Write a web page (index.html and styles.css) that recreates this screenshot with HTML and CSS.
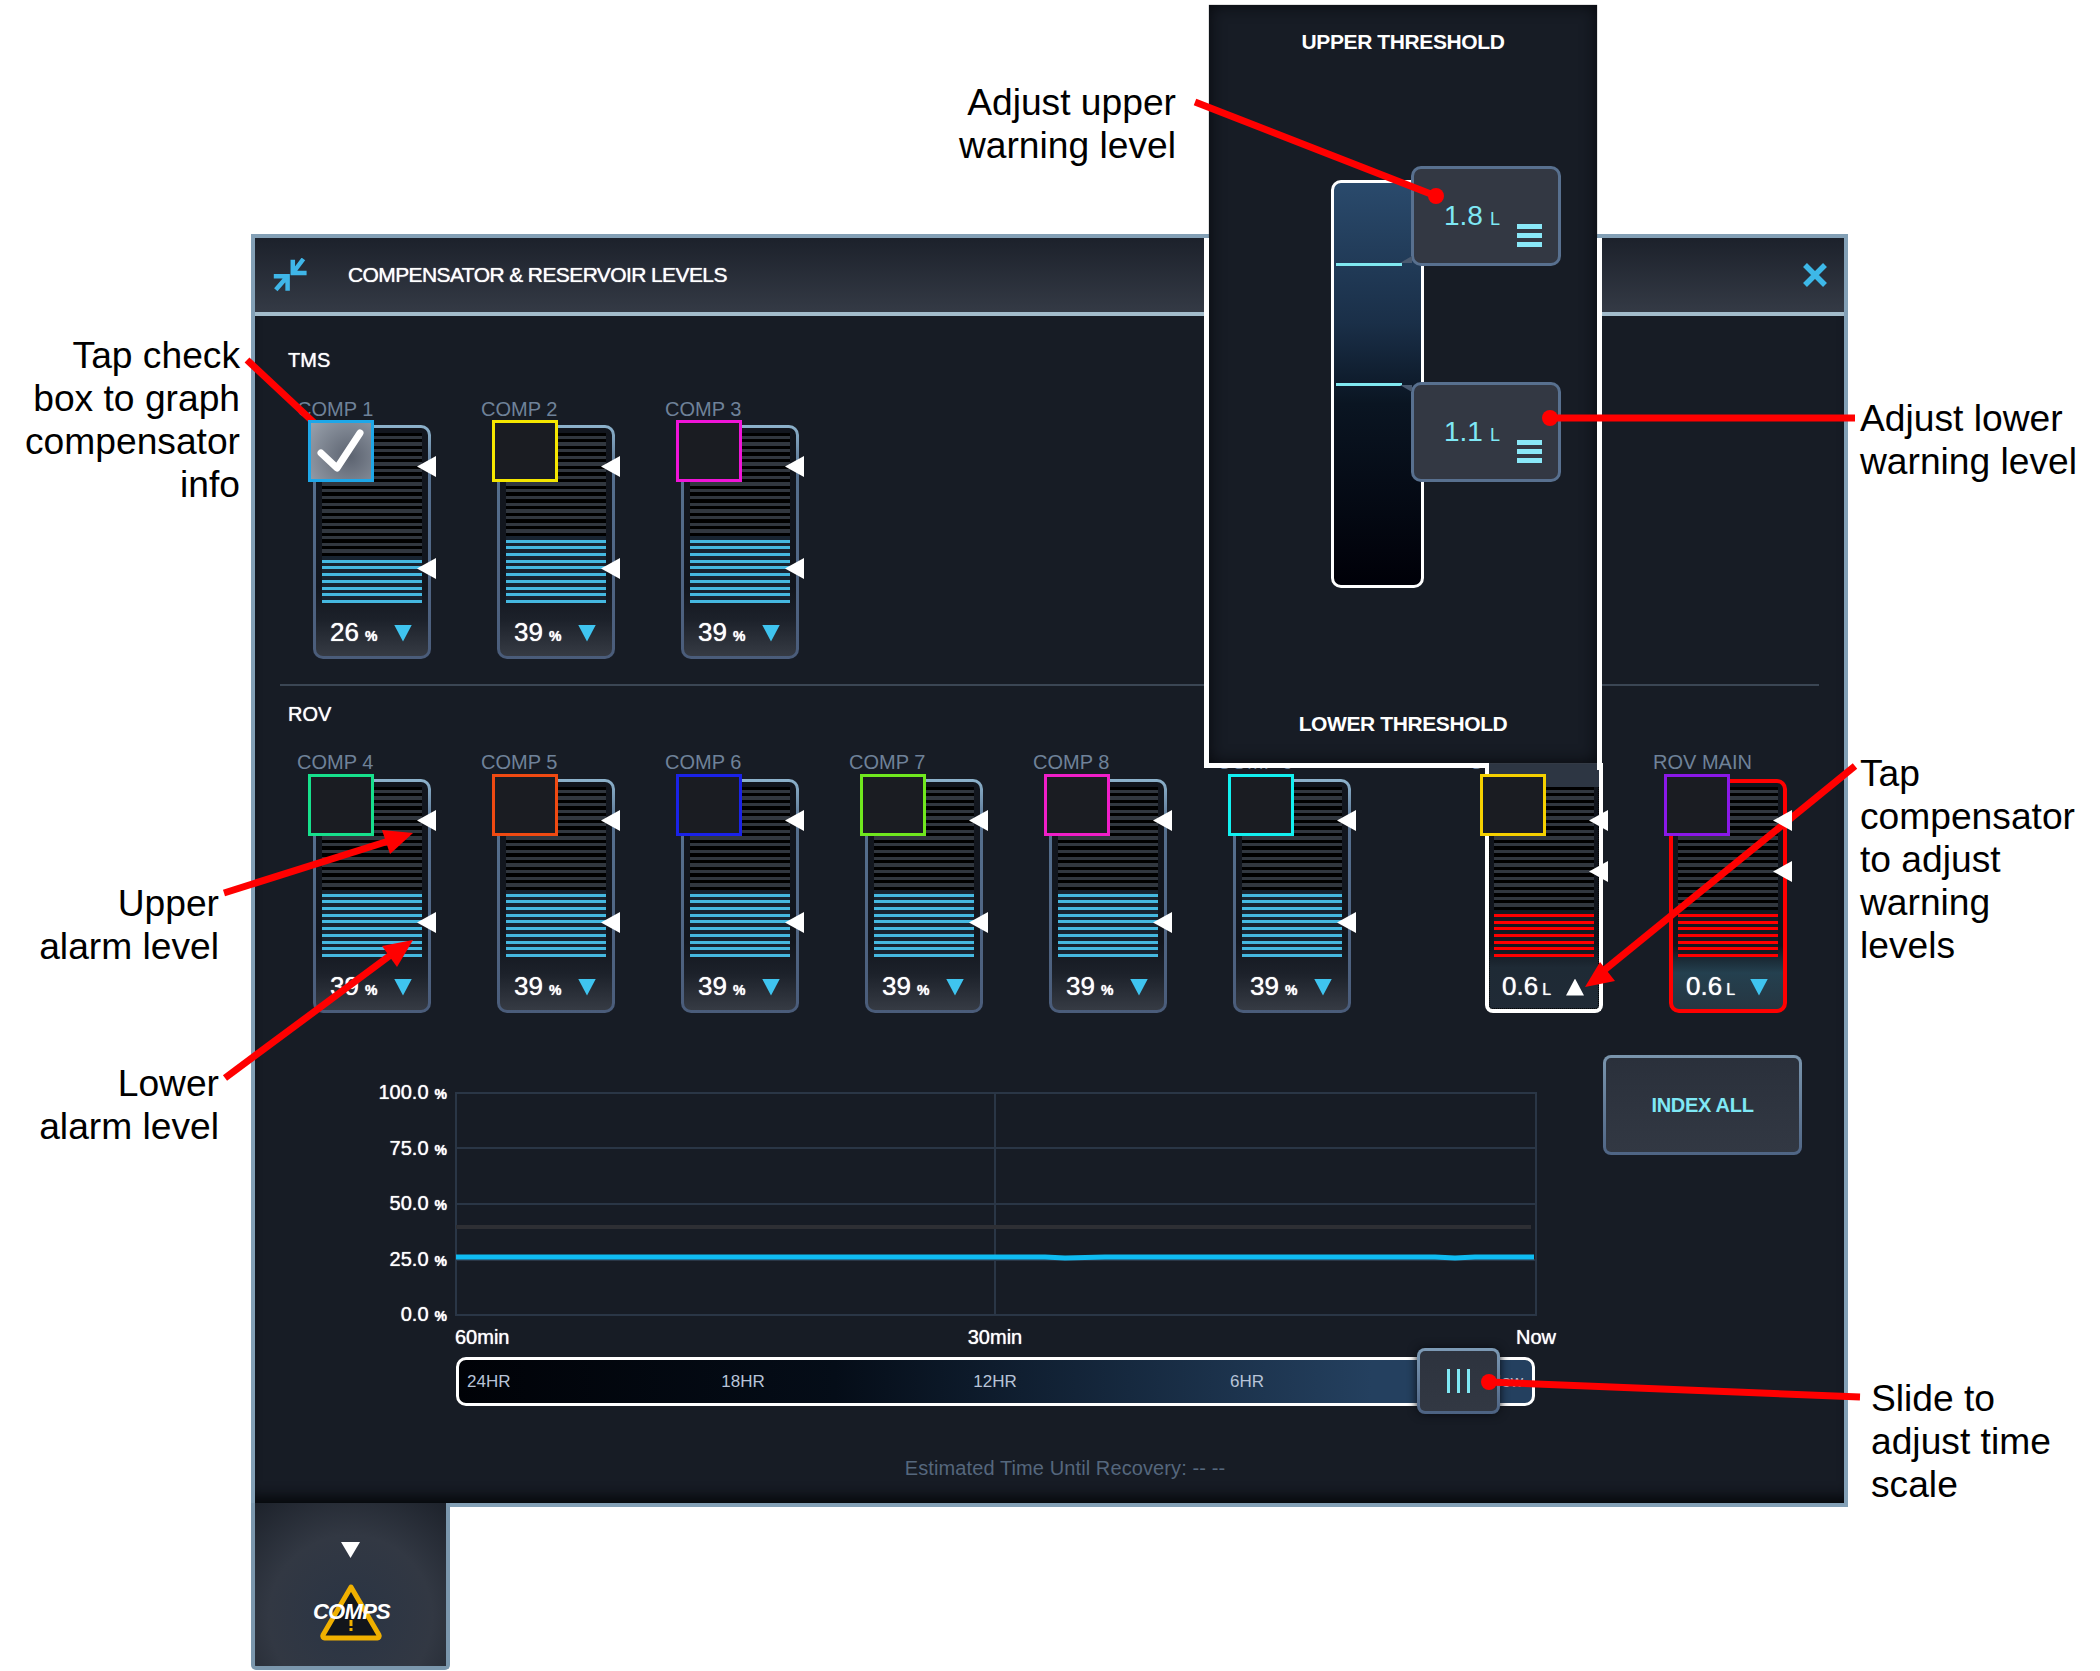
FILE: index.html
```html
<!DOCTYPE html>
<html lang="en">
<head>
    <meta charset="UTF-8">
    <title>Compensator &amp; Reservoir Levels</title>
    <link rel="stylesheet" href="styles.css">
</head>
<body>
<div class="page">
    <div class="panel">
        <div class="panel-header">
            <svg class="icon-compress" viewBox="0 0 34 34">
                <path d="M33.6 15H19.8V1.7M19.8 15L30.4 1"/>
                <path d="M.8 18.3H14.6V32.7M14.6 18.3L2.8 31.7"/>
            </svg>
            <div class="panel-title">COMPENSATOR &amp; RESERVOIR LEVELS</div>
            <svg class="icon-close" viewBox="0 0 24 24"><path d="M2 2L22 22M22 2L2 22"/></svg>
        </div>

        <div class="panel-body">
            <div class="section">
                <div class="section-label">TMS</div>
                <div class="comp-row">
                    <div class="comp">
                        <div class="comp-label">COMP 1</div>
                        <div class="tile">
                            <div class="check check-on">
                                <svg viewBox="0 0 66 62"><path d="M13 33L29 48L52 13"/></svg>
                            </div>
                            <i class="mark mark-hi"></i><i class="mark mark-lo"></i>
                            <div class="gauge"><div class="fill" style="height:47px"></div></div>
                            <div class="reading"><span class="val">26<small>%</small></span><i class="tri"></i></div>
                        </div>
                    </div>
                    <div class="comp">
                        <div class="comp-label">COMP 2</div>
                        <div class="tile">
                            <div class="check c-yellow"></div>
                            <i class="mark mark-hi"></i><i class="mark mark-lo"></i>
                            <div class="gauge"><div class="fill" style="height:67px"></div></div>
                            <div class="reading"><span class="val">39<small>%</small></span><i class="tri"></i></div>
                        </div>
                    </div>
                    <div class="comp">
                        <div class="comp-label">COMP 3</div>
                        <div class="tile">
                            <div class="check c-magenta"></div>
                            <i class="mark mark-hi"></i><i class="mark mark-lo"></i>
                            <div class="gauge"><div class="fill" style="height:67px"></div></div>
                            <div class="reading"><span class="val">39<small>%</small></span><i class="tri"></i></div>
                        </div>
                    </div>
                </div>
            </div>

            <div class="divider"></div>

            <div class="section section-rov">
                <div class="section-label">ROV</div>
                <div class="comp-row">
                    <div class="comp">
                        <div class="comp-label">COMP 4</div>
                        <div class="tile">
                            <div class="check c-green"></div>
                            <i class="mark mark-hi"></i><i class="mark mark-lo"></i>
                            <div class="gauge"><div class="fill" style="height:67px"></div></div>
                            <div class="reading"><span class="val">39<small>%</small></span><i class="tri"></i></div>
                        </div>
                    </div>
                    <div class="comp">
                        <div class="comp-label">COMP 5</div>
                        <div class="tile">
                            <div class="check c-orange"></div>
                            <i class="mark mark-hi"></i><i class="mark mark-lo"></i>
                            <div class="gauge"><div class="fill" style="height:67px"></div></div>
                            <div class="reading"><span class="val">39<small>%</small></span><i class="tri"></i></div>
                        </div>
                    </div>
                    <div class="comp">
                        <div class="comp-label">COMP 6</div>
                        <div class="tile">
                            <div class="check c-blue"></div>
                            <i class="mark mark-hi"></i><i class="mark mark-lo"></i>
                            <div class="gauge"><div class="fill" style="height:67px"></div></div>
                            <div class="reading"><span class="val">39<small>%</small></span><i class="tri"></i></div>
                        </div>
                    </div>
                    <div class="comp">
                        <div class="comp-label">COMP 7</div>
                        <div class="tile">
                            <div class="check c-lime"></div>
                            <i class="mark mark-hi"></i><i class="mark mark-lo"></i>
                            <div class="gauge"><div class="fill" style="height:67px"></div></div>
                            <div class="reading"><span class="val">39<small>%</small></span><i class="tri"></i></div>
                        </div>
                    </div>
                    <div class="comp">
                        <div class="comp-label">COMP 8</div>
                        <div class="tile">
                            <div class="check c-pink"></div>
                            <i class="mark mark-hi"></i><i class="mark mark-lo"></i>
                            <div class="gauge"><div class="fill" style="height:67px"></div></div>
                            <div class="reading"><span class="val">39<small>%</small></span><i class="tri"></i></div>
                        </div>
                    </div>
                    <div class="comp">
                        <div class="comp-label">COMP 9</div>
                        <div class="tile">
                            <div class="check c-cyan"></div>
                            <i class="mark mark-hi"></i><i class="mark mark-lo"></i>
                            <div class="gauge"><div class="fill" style="height:67px"></div></div>
                            <div class="reading"><span class="val">39<small>%</small></span><i class="tri"></i></div>
                        </div>
                    </div>
                    <div class="comp comp-after-gap">
                        <div class="comp-label">COMP 10</div>
                        <div class="tile tile-selected">
                            <div class="check c-gold"></div>
                            <i class="mark mark-hi"></i><i class="mark mark-lo-red"></i>
                            <div class="gauge"><div class="fill fill-red" style="height:47px"></div></div>
                            <div class="reading"><span class="val">0.6<small class="unit">L</small></span><i class="tri tri-up"></i></div>
                        </div>
                    </div>
                    <div class="comp">
                        <div class="comp-label">ROV MAIN</div>
                        <div class="tile tile-alarm">
                            <div class="check c-purple"></div>
                            <i class="mark mark-hi"></i><i class="mark mark-lo-red"></i>
                            <div class="gauge"><div class="fill fill-red" style="height:47px"></div></div>
                            <div class="reading"><span class="val">0.6<small class="unit">L</small></span><i class="tri"></i></div>
                        </div>
                    </div>
                </div>
            </div>

            <div class="chart-row">
                <div class="chart">
                    <div class="plot-row">
                        <div class="y-axis">
                            <div>100.0<small>%</small></div>
                            <div>75.0<small>%</small></div>
                            <div>50.0<small>%</small></div>
                            <div>25.0<small>%</small></div>
                            <div>0.0<small>%</small></div>
                        </div>
                        <svg class="plot" viewBox="0 0 1082 224">
                            <rect class="grid" x="1" y="1" width="1080" height="222"/>
                            <path class="grid" d="M1 56H1081M1 112H1081M1 168H1081M540 1V223"/>
                            <path class="series-grey" d="M1 135H1076"/>
                            <path class="series-blue" d="M1 165H590L610 166L650 165H980L1000 166L1020 165H1079"/>
                        </svg>
                    </div>
                    <div class="x-axis">
                        <span>60min</span>
                        <span class="x-mid">30min</span>
                        <span class="x-end">Now</span>
                    </div>
                    <div class="timeline">
                        <span class="tick-first">24HR</span>
                        <span>18HR</span>
                        <span>12HR</span>
                        <span>6HR</span>
                        <span class="tick-last">Now</span>
                        <div class="timeline-handle"><i></i><i></i><i></i></div>
                    </div>
                </div>
                <div class="btn-index">INDEX ALL</div>
            </div>

            <div class="recovery">Estimated Time Until Recovery: -- --</div>
        </div>
    </div>

    <div class="tab">
        <i class="tab-arrow"></i>
        <div class="warn">
            <svg viewBox="0 0 64 58">
                <path class="warn-tri" d="M32 4L60 52a2 2 0 0 1-2 3H6a2 2 0 0 1-2-3Z"/>
                <path class="warn-mark" d="M32 37V43M32 45V48"/>
            </svg>
            <span class="warn-text">COMPS</span>
        </div>
    </div>

    <!-- threshold popup opened over the selected tile -->
    <div class="popup">
        <div class="popup-title">UPPER THRESHOLD</div>
        <div class="slider">
            <div class="slider-line line-upper"></div>
            <div class="slider-line line-lower"></div>
            <div class="level level-upper">
                <span class="level-val">1.8<small>L</small></span>
                <span class="burger"><i></i><i></i><i></i></span>
            </div>
            <div class="level level-lower">
                <span class="level-val">1.1<small>L</small></span>
                <span class="burger"><i></i><i></i><i></i></span>
            </div>
        </div>
        <div class="popup-title popup-title-low">LOWER THRESHOLD</div>
    </div>
    <div class="edge edge-left"></div>
    <div class="edge edge-bottom"></div>
    <div class="edge edge-right"></div>

    <!-- callouts -->
    <svg class="arrows" viewBox="0 0 2100 1671">
        <path d="M247 360L324 432"/>
        <circle cx="324" cy="432" r="8"/>
        <path d="M1195 102L1436 196"/>
        <circle cx="1436" cy="196" r="8"/>
        <path d="M1855 418H1550"/>
        <circle cx="1550" cy="418" r="8"/>
        <path d="M1855 766L1597 976"/>
        <polygon points="1585,987 1600,962 1615,981"/>
        <path d="M224 893L395 839"/>
        <polygon points="413,833 382,830 390,854"/>
        <path d="M225 1078L392 954"/>
        <polygon points="413,940 382,946 397,967"/>
        <path d="M1860 1397L1489 1382"/>
        <circle cx="1489" cy="1382" r="8"/>
    </svg>
    <div class="note note-check">Tap check<br>box to graph<br>compensator<br>info</div>
    <div class="note note-upper">Adjust upper<br>warning level</div>
    <div class="note note-lower">Adjust lower<br>warning level</div>
    <div class="note note-tap">Tap<br>compensator<br>to adjust<br>warning<br>levels</div>
    <div class="note note-hi">Upper<br>alarm level</div>
    <div class="note note-lo">Lower<br>alarm level</div>
    <div class="note note-slide">Slide to<br>adjust time<br>scale</div>
</div>
</body>
</html>
```

FILE: styles.css
```css
* {
    box-sizing: border-box;
}
body {
    margin: 0;
    background-color: #fff;
    font-family: "Liberation Sans", Arial, sans-serif;
}
.page {
    position: relative;
    width: 2100px;
    height: 1671px;
    padding: 234px 0 0 251px;
    overflow: hidden;
}

/* main panel */
.panel {
    width: 1597px;
    height: 1273px;
    border: 4px solid #83a0b6;
    background-color: #171c25;
    box-shadow: inset 0 -14px 14px -8px #05070a;
}
.panel-header {
    display: flex;
    align-items: center;
    height: 78px;
    padding: 0 17px 0 18px;
    border-bottom: 4px solid #a3bccb;
    background: linear-gradient(#1c212b, #343a45);
}
.icon-compress {
    width: 34px;
    height: 34px;
    fill: none;
    stroke: #3fb6e8;
    stroke-width: 4.5;
}
.panel-title {
    margin-left: 41px;
    color: #fff;
    font-size: 21px;
    letter-spacing: -0.6px;
    text-shadow: 0 0 1px #fff;
}
.icon-close {
    width: 24px;
    height: 24px;
    margin-left: auto;
    fill: none;
    stroke: #3db8e8;
    stroke-width: 5.5;
}
.section {
    padding: 32px 0 0 33px;
}
.section-rov {
    padding-top: 16px;
}
.section-label {
    height: 24px;
    color: #fff;
    font-size: 20px;
    line-height: 24px;
    text-shadow: 0 0 1px #fff;
}
.comp-row {
    display: flex;
    gap: 66px;
    margin-top: 25px;
    padding-left: 25px;
}
.section-rov .comp-row {
    margin-top: 24px;
}
.comp {
    width: 118px;
}
.comp-after-gap {
    margin-left: 68px;
}
.comp-label {
    height: 24px;
    margin: 0 -40px 4px -16px;
    color: #6f8299;
    font-size: 20px;
    line-height: 24px;
    white-space: nowrap;
}
.section-rov .comp-label {
    margin-bottom: 5px;
}
.divider {
    height: 2px;
    margin: 25px 25px 0 25px;
    background-color: #3b4654;
}

/* gauge tile */
.tile {
    position: relative;
    height: 234px;
    padding: 5px 6px 0;
    border: 3px solid transparent;
    border-radius: 10px;
    background: linear-gradient(#12161e 70%, #1c212a 84%, #363b44) padding-box,
        linear-gradient(#8db2cc, #56708f 20%, #4a5c7a) border-box;
}
.tile-selected {
    padding: 8px 5px 0;
    border: 4px solid #fff;
    border-top: 0;
    border-radius: 0 0 8px 8px;
    background: linear-gradient(#10141c 72%, #1e2a35 82%, #202a36);
    outline: 1px dotted #000;
    outline-offset: -5px;
}
.tile-selected::before {
    content: "";
    position: absolute;
    top: -16px;
    left: -4px;
    right: -4px;
    height: 24px;
    border-left: 4px solid #fff;
    border-right: 4px solid #fff;
    background-color: #2d3643;
}
.tile-alarm {
    padding: 4px 5px 0;
    border: 4px solid #f00;
    background: linear-gradient(#10141c 72%, #24404f 84%, #263642);
}
.check {
    position: absolute;
    top: -8px;
    left: -8px;
    z-index: 1;
    width: 66px;
    height: 62px;
    border: 3px solid;
    background-color: #1a1c22;
}
.tile-selected .check {
    top: -5px;
}
.tile-selected .check,
.tile-alarm .check {
    left: -9px;
}
.tile-alarm .check {
    top: -9px;
}
.check-on {
    border-color: #1ea7e8;
    background: radial-gradient(circle at 65% 60%, #5c6370, #99a1ac);
}
.check-on svg {
    position: absolute;
    top: -3px;
    left: -3px;
    width: 66px;
    height: 62px;
    fill: none;
    stroke: #fff;
    stroke-width: 7;
    stroke-linecap: round;
    stroke-linejoin: round;
}
.c-yellow { border-color: #f5e600; }
.c-magenta { border-color: #f014d8; }
.c-green { border-color: #16e08c; }
.c-orange { border-color: #f04a12; }
.c-blue { border-color: #1a22e8; }
.c-lime { border-color: #70e81e; }
.c-pink { border-color: #f01ec8; }
.c-cyan { border-color: #12f0f0; }
.c-gold { border-color: #f5d000; }
.c-purple { border-color: #8a18e8; }
.mark {
    position: absolute;
    left: 101px;
    z-index: 1;
    width: 19px;
    height: 21px;
    background-color: #fff;
    clip-path: polygon(100% 0, 100% 100%, 0 50%);
}
.mark-hi {
    top: 28px;
}
.mark-lo {
    top: 130px;
}
.mark-lo-red {
    top: 79px;
}
.tile-selected .mark,
.tile-alarm .mark {
    left: 100px;
}
.tile-selected .mark-hi {
    top: 31px;
}
.tile-selected .mark-lo-red {
    top: 82px;
}
.tile-alarm .mark-hi {
    top: 27px;
}
.tile-alarm .mark-lo-red {
    top: 78px;
}
.gauge {
    position: relative;
    display: flex;
    align-items: flex-end;
    width: 100%;
    height: 170px;
    background: repeating-linear-gradient(to top, #000 0, #000 3.35px, #31373f 3.35px, #31373f 6.7px);
}
.fill {
    width: 100%;
    background: repeating-linear-gradient(to top, #45b8e0 0, #45b8e0 3px, #182431 3px, #182431 6.7px);
}
.fill-red {
    background: repeating-linear-gradient(to top, #f00 0, #f00 3px, #141a22 3px, #141a22 6.7px);
}
.reading {
    display: flex;
    align-items: center;
    height: 32px;
    margin-top: 13px;
    padding-left: 8px;
}
.val {
    width: 64px;
    color: #fff;
    font-size: 26px;
    text-shadow: 0 0 1px #fff;
    white-space: nowrap;
}
.val small {
    margin-left: 6px;
    font-size: 14px;
    font-weight: bold;
}
.val small.unit {
    margin-left: 4px;
    font-weight: normal;
    font-size: 16px;
}
.tri {
    width: 18px;
    height: 17px;
    margin-top: 2px;
    background-color: #3fc4ef;
    clip-path: polygon(0 0, 100% 0, 50% 100%);
}
.tri-up {
    background-color: #fff;
    clip-path: polygon(50% 0, 100% 100%, 0 100%);
}

/* history chart */
.chart-row {
    display: flex;
    align-items: flex-start;
    margin: 42px 0 0 122px;
}
.chart {
    width: 1218px;
    padding-top: 37px;
}
.plot-row {
    display: flex;
    gap: 8px;
    height: 224px;
}
.y-axis {
    display: flex;
    flex-direction: column;
    justify-content: space-between;
    width: 70px;
    height: 248px;
    margin-top: -12px;
    color: #fff;
    font-size: 20px;
    line-height: 24px;
    text-align: right;
    text-shadow: 0 0 1px #fff;
}
.y-axis small {
    margin-left: 6px;
    font-size: 14px;
    font-weight: bold;
}
.plot {
    width: 1082px;
    height: 224px;
}
.plot .grid {
    fill: none;
    stroke: #2a3646;
    stroke-width: 2;
}
.series-grey {
    fill: none;
    stroke: #2e2f34;
    stroke-width: 4;
}
.series-blue {
    fill: none;
    stroke: #0fbcf2;
    stroke-width: 5;
}
.x-axis {
    display: grid;
    grid-template-columns: 485px 110px 1fr;
    width: 1101px;
    margin: 9px 0 0 78px;
    color: #fff;
    font-size: 20px;
    line-height: 24px;
    text-shadow: 0 0 1px #fff;
}
.x-mid {
    text-align: center;
}
.x-end {
    text-align: right;
}
.timeline {
    position: relative;
    display: grid;
    grid-template-columns: 158px repeat(3, 252px) 1fr;
    align-items: center;
    width: 1079px;
    height: 49px;
    margin: 8px 0 0 79px;
    border: 3px solid #fff;
    border-radius: 10px;
    background: linear-gradient(to right, #000207, #050d18 35%, #24405f 85%, #24405f);
    color: #b8c4d8;
    font-size: 17px;
    text-align: center;
}
.tick-first {
    padding-left: 8px;
    text-align: left;
}
.tick-last {
    padding-right: 9px;
    text-align: right;
}
.timeline-handle {
    position: absolute;
    top: -12px;
    left: 958px;
    display: flex;
    align-items: center;
    justify-content: center;
    gap: 7px;
    width: 83px;
    height: 66px;
    border: 3px solid transparent;
    border-radius: 8px;
    background: linear-gradient(#2d333e, #323843) padding-box,
        linear-gradient(#7d9bb6, #4c6282) border-box;
    box-shadow: 0 0 10px #0a0d12;
}
.timeline-handle i {
    width: 3px;
    height: 24px;
    background-color: #7fe8f5;
}
.btn-index {
    display: flex;
    align-items: center;
    justify-content: center;
    width: 199px;
    height: 100px;
    margin-left: 8px;
    border: 3px solid transparent;
    border-radius: 8px;
    background: linear-gradient(#2a303b, #323843) padding-box,
        linear-gradient(#7a95ad, #4f6585) border-box;
    color: #7fe8f5;
    font-size: 20px;
    font-weight: bold;
    letter-spacing: -0.3px;
}
.recovery {
    margin-top: 50px;
    padding-left: 31px;
    color: #55677d;
    font-size: 20px;
    letter-spacing: 0.1px;
    line-height: 24px;
    text-align: center;
}

/* bottom tab */
.tab {
    display: flex;
    flex-direction: column;
    align-items: center;
    width: 199px;
    height: 167px;
    margin-top: -4px;
    padding-top: 39px;
    border: 4px solid #7b97ad;
    border-top: 0;
    border-radius: 0 0 5px 5px;
    background: radial-gradient(circle at 50% 70%, #2a3444, #323843 55%, #1d222b);
}
.tab-arrow {
    width: 19px;
    height: 16px;
    background-color: #fff;
    clip-path: polygon(0 0, 100% 0, 50% 100%);
}
.warn {
    position: relative;
    width: 64px;
    height: 58px;
    margin-top: 25px;
}
.warn svg {
    width: 64px;
    height: 58px;
}
.warn-tri {
    fill: #12151b;
    stroke: #f0b000;
    stroke-width: 5;
    stroke-linejoin: round;
}
.warn-mark {
    fill: none;
    stroke: #f0b000;
    stroke-width: 3;
}
.warn-text {
    position: absolute;
    top: 16px;
    left: -7px;
    width: 80px;
    color: #fff;
    font-size: 22px;
    font-style: italic;
    font-weight: bold;
    letter-spacing: -0.7px;
    line-height: 26px;
    text-align: center;
}

/* threshold popup */
.popup {
    position: absolute;
    top: 5px;
    left: 1209px;
    width: 388px;
    height: 758px;
    padding-top: 25px;
    background-color: #171c25;
    box-shadow: inset 0 0 16px #07090d, 0 0 1px #555;
}
.popup-title {
    height: 24px;
    color: #fff;
    font-size: 21px;
    font-weight: bold;
    letter-spacing: -0.4px;
    line-height: 24px;
    text-align: center;
}
.popup-title-low {
    margin-top: 124px;
}
.slider {
    position: relative;
    width: 93px;
    height: 408px;
    margin: 126px 0 0 122px;
    border: 3px solid #fff;
    border-radius: 10px;
    background: linear-gradient(#2a4a6c, #1a2f48 35%, #0a1522 55%, #000008);
}
.slider-line {
    position: absolute;
    left: 2px;
    width: 66px;
    height: 3px;
    background-color: #7fe8f0;
}
.line-upper {
    top: 80px;
}
.line-lower {
    top: 200px;
}
.level {
    position: absolute;
    left: 77px;
    width: 150px;
    height: 100px;
    border: 3px solid #58708f;
    border-radius: 10px;
    background-color: #333843;
}
.level::before {
    content: "";
    position: absolute;
    left: -14px;
    width: 12px;
    height: 7px;
    background-color: #4a5a70;
}
.level-upper {
    top: -17px;
}
.level-upper::before {
    bottom: 0;
    clip-path: polygon(100% 0, 100% 100%, 0 100%);
}
.level-lower {
    top: 199px;
}
.level-lower::before {
    top: 0;
    clip-path: polygon(0 0, 100% 0, 100% 100%);
}
.level-val {
    position: absolute;
    top: 31px;
    left: 30px;
    color: #7fe8f5;
    font-size: 28px;
    line-height: 32px;
    white-space: nowrap;
}
.level-val small {
    margin-left: 7px;
    font-size: 18px;
}
.burger {
    position: absolute;
    top: 55px;
    left: 103px;
    display: flex;
    flex-direction: column;
    gap: 4px;
    width: 25px;
}
.burger i {
    height: 5px;
    background-color: #8ae8f8;
}
.edge {
    position: absolute;
    background-color: #fff;
}
.edge-left {
    top: 238px;
    left: 1204px;
    width: 5px;
    height: 530px;
}
.edge-bottom {
    top: 763px;
    left: 1204px;
    width: 285px;
    height: 5px;
}
.edge-right {
    top: 238px;
    left: 1597px;
    width: 5px;
    height: 532px;
}

/* callouts */
.arrows {
    position: absolute;
    top: 0;
    left: 0;
    width: 2100px;
    height: 1671px;
    pointer-events: none;
}
.arrows path {
    fill: none;
    stroke: #f00;
    stroke-width: 7;
}
.arrows circle,
.arrows polygon {
    fill: #f00;
}
.note {
    position: absolute;
    color: #000;
    font-size: 37.2px;
    line-height: 43px;
    white-space: nowrap;
}
.note-check {
    top: 334px;
    right: 1860px;
    text-align: right;
}
.note-upper {
    top: 81px;
    right: 924px;
    text-align: right;
}
.note-lower {
    top: 397px;
    left: 1860px;
}
.note-tap {
    top: 752px;
    left: 1860px;
}
.note-hi {
    top: 882px;
    right: 1881px;
    text-align: right;
}
.note-lo {
    top: 1062px;
    right: 1881px;
    text-align: right;
}
.note-slide {
    top: 1377px;
    left: 1871px;
}
```
